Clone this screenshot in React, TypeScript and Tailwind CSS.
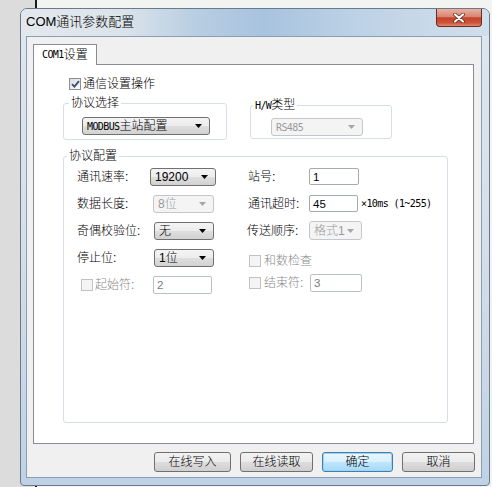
import React from "react";

const Arrow = ({ disabled }: { disabled?: boolean }) => (
  <svg width="7" height="4" viewBox="0 0 7 4" className="shrink-0">
    <path d="M0 0H7L3.5 4Z" fill={disabled ? "#a6a6a6" : "#000"} />
  </svg>
);

const Select = ({
  value,
  width,
  height = "h-[18px]",
  disabled,
}: {
  value: React.ReactNode;
  width: string;
  height?: string;
  disabled?: boolean;
}) => (
  <div
    className={`${width} ${height} flex items-center justify-between pl-[4px] pr-[7px] rounded-[3px] border text-[12px] leading-[14px] ${
      disabled
        ? "border-[#c3c7cb] bg-[#f4f4f4] text-[#9a9a9a]"
        : "border-[#707070] bg-[linear-gradient(to_bottom,#f4f4f4_0%,#ececec_50%,#dedede_51%,#d2d2d2_100%)] text-black"
    }`}
  >
    <span>{value}</span>
    <Arrow disabled={disabled} />
  </div>
);

const Input = ({
  value,
  width,
  height = "h-[18px]",
  disabled,
}: {
  value: string;
  width: string;
  height?: string;
  disabled?: boolean;
}) => (
  <div
    className={`${width} ${height} flex items-center pl-[3px] rounded-[2px] border bg-white text-[11.5px] leading-[14px] ${
      disabled ? "border-[#b9c0c8] text-[#7a7a7a]" : "border-[#a3aab3] text-black"
    }`}
  >
    {value}
  </div>
);

const Check = ({ checked, disabled }: { checked?: boolean; disabled?: boolean }) => (
  <span
    className={`w-[12px] h-[12px] shrink-0 border flex items-center justify-center ${
      disabled
        ? "border-[#c2c2c2] bg-[#f4f4f4]"
        : "border-[#8e8f8f] bg-[linear-gradient(135deg,#dcdcdc,#fbfbfb)]"
    }`}
  >
    {checked && (
      <svg width="9" height="8" viewBox="0 0 9 8">
        <path d="M1 4.2L3.4 6.6L8 1.2" fill="none" stroke="#3c4f82" strokeWidth="1.9" />
      </svg>
    )}
  </span>
);

const Btn = ({ label, width, primary }: { label: string; width: string; primary?: boolean }) => (
  <button
    className={`${width} h-[20px] rounded-[3px] border text-[12px] leading-[14px] text-black ${
      primary
        ? "border-[#3c7fb1] bg-[linear-gradient(to_bottom,#eaf6fd_0%,#d9f0fc_50%,#bee6fd_51%,#a7d9f5_100%)] shadow-[inset_0_0_0_1px_#9fd3f2]"
        : "border-[#707070] bg-[linear-gradient(to_bottom,#f2f2f2_0%,#ebebeb_50%,#dddddd_51%,#cfcfcf_100%)]"
    }`}
  >
    {label}
  </button>
);

// half-width latin as drawn by the old SimSun-style dialog font
const Mono = ({ children }: { children: React.ReactNode }) => (
  <span className="font-['DejaVu_Sans_Mono',monospace] font-normal text-[10px] tracking-[-0.6px]">{children}</span>
);

export default function App() {
  return (
    <div className="w-[492px] h-[487px] overflow-hidden pt-[8px] pl-[20px] bg-[linear-gradient(to_right,#dcdcdc_0px,#dcdcdc_35px,#1a1a1a_35px,#1a1a1a_37px,#f2f4f2_37px)] font-['Liberation_Sans','Noto_Sans_CJK_SC',sans-serif] font-light text-black">
      {/* window */}
      <div className="w-[470px] h-[478px] rounded-t-[7px] rounded-b-[4px] border border-[#6a7a8c] bg-[linear-gradient(to_bottom,#dfe7ef_0%,#d3dfea_50%,#bfd2e5_100%)] flex flex-col">
        {/* title bar */}
        <div className="h-[27px] flex items-start pl-[5px] pr-[7px] rounded-t-[6px] bg-[linear-gradient(to_right,#e3e8ed_0%,#dbe3ea_22%,#b7cde2_38%,#a8c3de_52%,#bdd2e6_72%,#d2dfeb_100%)]">
          <span className="mt-[5px] text-[13px] leading-[16px]">COM通讯参数配置</span>
          <div className="ml-auto w-[46px] h-[18px] rounded-b-[4px] border border-t-0 border-[#6e2a20] bg-[linear-gradient(to_bottom,#e9b1a4_0%,#d98570_45%,#c3422b_52%,#cc553c_82%,#e08a70_100%)] flex items-center justify-center">
            <svg width="12" height="10" viewBox="0 0 12 10">
              <path d="M2 1.5L10 8.5M10 1.5L2 8.5" stroke="#5a2219" strokeWidth="3.6" strokeLinecap="round" />
              <path d="M2 1.5L10 8.5M10 1.5L2 8.5" stroke="#fff" strokeWidth="2.2" strokeLinecap="round" />
            </svg>
          </div>
        </div>

        {/* client area */}
        <div className="ml-[5px] mr-[7px] h-[442px] border border-[#8c9eb2] bg-[#f0f0f0] flex flex-col pl-[6px] pr-[7px] pt-[7px]">
          {/* tab */}
          <div className="relative z-10 -mb-px w-[64px] h-[21px] border border-b-0 border-[#898c95] bg-white flex items-center pl-[8px] text-[12px] leading-[14px]">
            <Mono>COM1</Mono>设置
          </div>

          {/* tab panel */}
          <div className="h-[380px] border border-[#898c95] bg-white flex flex-col">
            <div className="mt-[12px] ml-[35px] h-[13px] flex items-center gap-[2px] text-[12px] leading-[14px]">
              <Check checked />
              <span>通信设置操作</span>
            </div>

            <div className="mt-[6px] ml-[29px] flex items-start">
              <fieldset className="w-[164px] border border-[#d5dfe5] rounded-[3px]">
                <legend className="ml-[5px] px-[2px] text-[12px] leading-[14px]">协议选择</legend>
                <div className="pl-[18px] pt-[7px] pb-[4px]">
                  <Select
                    width="w-[128px]"
                    value={
                      <>
                        <Mono>MODBUS</Mono>主站配置
                      </>
                    }
                  />
                </div>
              </fieldset>

              <fieldset className="mt-[2px] ml-[23px] w-[142px] border border-[#d5dfe5] rounded-[3px]">
                <legend className="ml-[2px] px-[2px] text-[12px] leading-[14px]">
                  <Mono>H/W</Mono>类型
                </legend>
                <div className="pl-[20px] pt-[5px] pb-[2px]">
                  <Select width="w-[92px]" disabled value={<Mono>RS485</Mono>} />
                </div>
              </fieldset>
            </div>

            <fieldset className="mt-[9px] ml-[29px] w-[385px] h-[274px] border border-[#d5dfe5] rounded-[3px]">
              <legend className="ml-[3px] px-[2px] text-[12px] leading-[14px]">协议配置</legend>
              <div className="flex pl-[13px] text-[12px] leading-[14px]">
                {/* left column */}
                <div className="w-[171px] flex flex-col">
                  <div className="h-[27px] flex items-center">
                    <span className="w-[73px]">通讯速率:</span>
                    <Select width="w-[66px]" value="19200" />
                  </div>
                  <div className="h-[27px] flex items-center">
                    <span className="w-[76px]">数据长度:</span>
                    <Select width="w-[61px]" disabled value="8位" />
                  </div>
                  <div className="h-[27px] flex items-center">
                    <span className="w-[77px]">奇偶校验位:</span>
                    <Select width="w-[60px]" value="无" />
                  </div>
                  <div className="h-[27px] flex items-center">
                    <span className="w-[77px]">停止位:</span>
                    <Select width="w-[60px]" value="1位" />
                  </div>
                  <div className="h-[27px] flex items-center">
                    <div className="w-[76px] flex items-center gap-[2px] pl-[4px] text-[#8a8a8a]">
                      <Check disabled />
                      <span>起始符:</span>
                    </div>
                    <Input width="w-[59px]" disabled value="2" />
                  </div>
                </div>

                {/* right column */}
                <div className="flex flex-col">
                  <div className="h-[27px] flex items-center">
                    <span className="w-[61px]">站号:</span>
                    <Input width="w-[50px]" height="h-[17px]" value="1" />
                  </div>
                  <div className="h-[27px] flex items-center">
                    <span className="w-[61px]">通讯超时:</span>
                    <Input width="w-[49px]" height="h-[17px]" value="45" />
                    <span className="ml-[3px]">
                      <Mono>×10ms (1~255)</Mono>
                    </span>
                  </div>
                  <div className="h-[27px] flex items-center -ml-px">
                    <span className="w-[62px]">传送顺序:</span>
                    <Select width="w-[53px]" height="h-[19px]" disabled value="格式1" />
                  </div>
                  <div className="mt-[6px] h-[22px] flex items-center gap-[3px] pl-[1px] text-[#8a8a8a]">
                    <Check disabled />
                    <span>和数检查</span>
                  </div>
                  <div className="h-[21px] flex items-center">
                    <div className="w-[62px] flex items-center gap-[3px] pl-[1px] text-[#8a8a8a]">
                      <Check disabled />
                      <span>结束符:</span>
                    </div>
                    <Input width="w-[52px]" disabled value="3" />
                  </div>
                </div>
              </div>
            </fieldset>
          </div>

          {/* buttons */}
          <div className="mt-[8px] -mr-px flex justify-end gap-[9px]">
            <Btn label="在线写入" width="w-[77px]" />
            <Btn label="在线读取" width="w-[73px]" />
            <Btn label="确定" width="w-[71px]" primary />
            <Btn label="取消" width="w-[73px]" />
          </div>
        </div>
      </div>
    </div>
  );
}
